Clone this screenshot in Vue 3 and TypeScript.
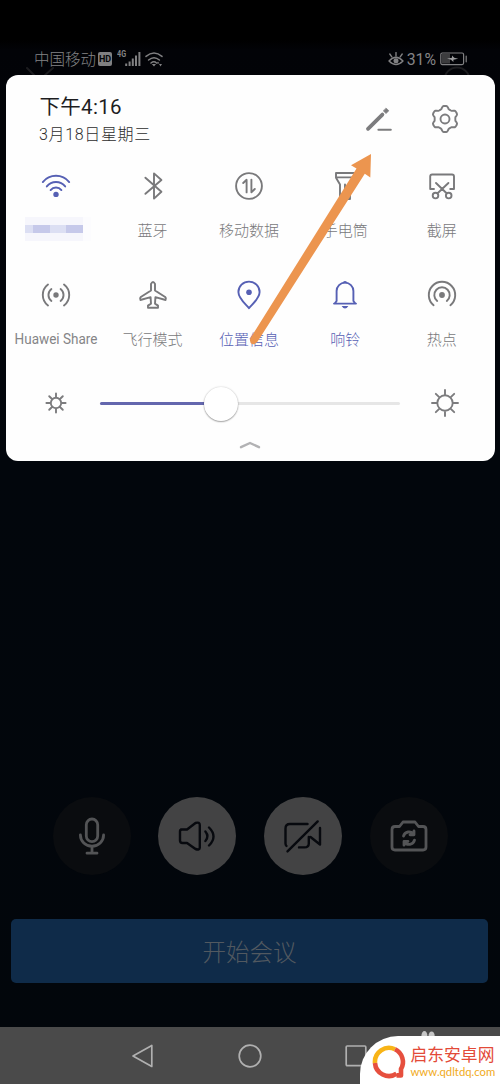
<script setup lang="ts">
interface Tile {
  label: string
  line: string
  solid?: string
  active?: boolean
  kind?: 'mosaic' | 'latin'
}

const dot = (x: number, y: number, r: number): string =>
  `M${x - r} ${y}a${r} ${r} 0 1 0 ${2 * r} 0a${r} ${r} 0 1 0 ${-2 * r} 0Z`

const tiles: Tile[] = [
  {
    label: '',
    kind: 'mosaic',
    active: true,
    line: 'M-13.2 -3.9A17 17 0 0 1 13.2 -3.9M-9.2 .4A11.8 11.8 0 0 1 9.2 .4M-5.4 4.1A7 7 0 0 1 5.4 4.1',
    solid: dot(0, 8.4, 2.7),
  },
  { label: '蓝牙', line: 'M-7.6 -8.3L8.4 5.8L1 12.6V-12.6L8.4 -6L-7.6 7.8' },
  {
    label: '移动数据',
    line: dot(0, 0, 12.9) + 'M-5.8 -3L-2.4 -6.2V6.4M2.4 -6.4V6.2L5.8 3',
  },
  {
    label: '手电筒',
    line: 'M-9 -13H9V-8.3L5 -1.5V13H-5V-1.5L-9 -8.3ZM-9 -8.6H9M0 -1.5V3',
  },
  {
    label: '截屏',
    line:
      'M-8 3H-11.8V-9.5Q-11.8 -11.5 -9.8 -11.5H10Q12 -11.5 12 -9.5V3H8.2M-6 -3L4.6 7.2M6.4 -3L-4.4 7.2' +
      dot(-6.5, 9.6, 2.8) +
      dot(6.7, 9.6, 2.8),
  },
  {
    label: 'Huawei Share',
    kind: 'latin',
    line: 'M-4.6 -6A7.6 7.6 0 0 0 -4.6 6M4.6 -6A7.6 7.6 0 0 1 4.6 6M-8 -10.5A13.2 13.2 0 0 0 -8 10.5M8 -10.5A13.2 13.2 0 0 1 8 10.5',
    solid: dot(0, 0, 2.7),
  },
  {
    label: '飞行模式',
    line: 'M-2 -11Q0 -15 2 -11V-4.5L12.2 2Q13.6 3.4 12.6 5L2.4 2.2L2 8.6L5 10.6V12.8H-5V10.6L-2 8.6L-2.4 2.2L-12.6 5Q-13.6 3.4 -12.2 2L-2 -4.5Z',
  },
  {
    label: '位置信息',
    active: true,
    line: 'M0 13.2C-3.5 9 -10.6 3.4 -10.6 -3A10.6 10.4 0 0 1 10.6 -3C10.6 3.4 3.5 9 0 13.2Z',
    solid: dot(0, -2.8, 2.8),
  },
  {
    label: '响铃',
    active: true,
    line: 'M-11 8.6H11M-10.4 8.6L-8.4 6V-4A8.4 8.4 0 0 1 8.4 -4V6L10.4 8.6',
    solid: 'M-3 -11.8Q0 -16 3 -11.8ZM-3.4 11H3.4Q0 16 -3.4 11Z',
  },
  {
    label: '热点',
    line: 'M-8.4 10.2A13.2 13.2 0 1 1 8.4 10.2M-4.8 6A7.7 7.7 0 1 1 4.8 6',
    solid: dot(0, 0, 2.9),
  },
]

const sunRays = (inner: number, outer: number): string =>
  Array.from({ length: 8 }, (_, i) => {
    const a = (i * Math.PI) / 4
    const p = (r: number) => `${(Math.cos(a) * r).toFixed(2)} ${(Math.sin(a) * r).toFixed(2)}`
    return `M${p(inner)}L${p(outer)}`
  }).join('')

const smallSun = dot(0, 0, 5.2) + sunRays(5.6, 9.6)
const largeSun = dot(0, 0, 7.7) + sunRays(8.2, 13)

const gear = (() => {
  const pts: string[] = []
  for (let i = 0; i < 72; i++) {
    const a = (i / 72) * Math.PI * 2 - Math.PI / 2
    const r = 11.7 + 1.4 * Math.tanh(2.2 * Math.cos(6 * a + Math.PI))
    pts.push(`${(Math.cos(a) * r).toFixed(2)} ${(Math.sin(a) * r).toFixed(2)}`)
  }
  return 'M' + pts.join('L') + 'Z' + dot(0, 0, 4.5)
})()

interface Control {
  name: string
  light: boolean
  line: string
}

const controls: Control[] = [
  {
    name: 'mic',
    light: false,
    line: 'M-5.7 -11.3A5.7 5.7 0 0 1 5.7 -11.3V0A5.7 5.7 0 0 1 -5.7 0ZM-11.6 -1A11.6 11.2 0 0 0 11.6 -1M0 10.4V17M-5 17.2H5',
  },
  {
    name: 'speaker',
    light: true,
    line: 'M-16 -6.5H-10L-1.5 -13Q2.8 -14.2 2.8 -11V11.5Q2.8 14.5 -1.5 13L-10 7H-14.5Q-17 7 -17 4.5V-4.5Q-17 -6.5 -15 -6.5M8.4 -4.5Q12.4 .3 8.4 5M12 -8.5Q21 .3 12 9.5',
  },
  {
    name: 'camera-off',
    light: true,
    line: 'M4.5 -12H-13Q-17.5 -12 -17.5 -7.5V7.5Q-17.5 9 -16.5 10M-4 11.4H1.5Q5.8 11.4 5.8 7.4V1M7.5 1L17 8.5V-8M-15.5 15.4L14.7 -14.6',
  },
  {
    name: 'camera-flip',
    light: false,
    line: 'M-14 -9.5H-9.5L-6 -14H6L9.5 -9.5H14Q17 -9.5 17 -6.5V11Q17 14 14 14H-14Q-17 14 -17 11V-6.5Q-17 -9.5 -14 -9.5ZM-5.5 .2A5.6 5.6 0 0 1 4.6 -1.6M5.5 4.2A5.6 5.6 0 0 1 -4.6 5.9M5 -5V-1.2H1M-5 9.2V5.4H-1',
  },
]
</script>

<template>
  <div class="screen">
    <header class="status">
      <span class="carrier">中国移动</span>
      <span class="hd">HD</span>
      <span class="net">4G</span>
      <svg class="signal" width="16" height="15" viewBox="0 0 16 15">
        <path d="M1.2 11.5V14M4.6 9.5V14M7.8 6.5V14M11 3.5V14M14.4 0V14" />
      </svg>
      <svg class="wlan" width="18" height="15" viewBox="0 0 18 15">
        <path d="M1 4.4Q9 -2.4 17 4.4M3.6 8Q9 3.4 14.4 8M6 11Q9 8.6 11.5 11" />
        <path class="solid" d="M6.8 12L9 14.5L11 12ZM13 9.5L14.4 11.5H11.6ZM15.5 14.5L14 12H17Z" />
      </svg>
      <span class="gap"></span>
      <svg class="eye" width="16" height="15" viewBox="0 0 16 15">
        <path d="M1 9Q8 1.5 15 9Q8 16 1 9ZM8 3.8V.6M3.8 4.8L1.8 2M12.2 4.8L14.2 2" />
        <circle class="solid" cx="8" cy="8.8" r="2.5" />
      </svg>
      <span class="percent">31%</span>
      <svg class="battery" width="28" height="14" viewBox="0 0 28 14">
        <rect class="charge" x="2" y="2" width="8" height="9.5" />
        <rect x=".8" y="1" width="22.8" height="11.6" rx="1.5" />
        <path d="M26.2 4V9.8" />
        <path class="bolt" d="M7 6.4L12 5.8V3.6L14.2 5.8L18.2 6.8L13.4 7.8V10L11 7.8Z" />
      </svg>
      <svg class="backdrop" width="500" height="12" viewBox="0 64 500 12">
        <path d="M27 69L35 77M53 69L44 77" />
        <circle cx="457" cy="81" r="12.5" />
      </svg>
    </header>

    <section class="panel">
      <div class="head">
        <div>
          <div class="time">下午4:16</div>
          <div class="date">3月18日星期三</div>
        </div>
        <div class="tools">
          <svg width="32" height="32" viewBox="-16 -16 32 32">
            <path class="pencil" d="M-10 9.8L4.4 -4.4" />
            <path class="tip" d="M8.3 -10.8L10.9 -8.2L8 -5.4L5.4 -8Z" />
            <path class="underline" d="M.4 10.7H12.8" />
          </svg>
          <svg class="line" width="32" height="32" viewBox="-16 -16 32 32"><path :d="gear" /></svg>
        </div>
      </div>

      <div class="tiles">
        <div v-for="(t, i) in tiles" :key="i" class="tile" :class="{ active: t.active }">
          <svg width="32" height="32" viewBox="-16 -16 32 32">
            <path class="stroke" :d="t.line" />
            <path v-if="t.solid" class="fill" :d="t.solid" />
          </svg>
          <div v-if="t.kind === 'mosaic'" class="mosaic">
            <i v-for="n in 24" :key="n" :class="'m' + n"></i>
          </div>
          <span v-else class="label" :class="t.kind">{{ t.label }}</span>
        </div>
      </div>

      <div class="brightness">
        <svg class="line" width="32" height="32" viewBox="-16 -16 32 32"><path :d="smallSun" /></svg>
        <div class="track"><div class="level"></div><div class="knob"></div></div>
        <svg class="line" width="32" height="32" viewBox="-16 -16 32 32"><path :d="largeSun" /></svg>
      </div>
      <svg class="handle" width="22" height="10" viewBox="0 0 22 10"><path d="M2 7.2L11 3L20 7.2" /></svg>
    </section>

    <div class="controls">
      <div v-for="c in controls" :key="c.name" class="control" :class="{ light: c.light }">
        <svg width="44" height="44" viewBox="-22 -22 44 44"><path :d="c.line" /></svg>
      </div>
    </div>

    <div class="start">开始会议</div>

    <nav class="nav">
      <svg width="24" height="26" viewBox="0 0 24 26"><path d="M20.8 2.4V23.4L2 13Z" /></svg>
      <svg width="26" height="26" viewBox="0 0 26 26"><circle cx="13" cy="13" r="10.8" /></svg>
      <svg width="24" height="26" viewBox="0 0 24 26"><rect x="1.2" y="3" width="19.6" height="19.6" rx="1" /></svg>
    </nav>

    <svg class="arrow" width="140" height="200" viewBox="240 150 140 200">
      <path d="M371 154L351 165.3L356.5 168.6L250.2 338.5Q249.2 343.2 252.5 344.2Q255.4 344.6 257.6 341.5L364.8 173.8L370.3 177.6Z" />
    </svg>

    <svg class="ears" width="18" height="12" viewBox="0 0 18 12">
      <ellipse cx="4.4" cy="6" rx="3" ry="5" />
      <ellipse cx="11.6" cy="6.4" rx="3.1" ry="5" />
    </svg>
    <div class="brand">
      <svg width="36" height="36" viewBox="0 0 36 36">
        <path class="yellow" d="M4 19A14 14 0 0 1 24 5.3" />
        <path class="red" d="M24 5.3A14 14 0 0 1 30 25V31.4H25.5" />
        <path class="red" d="M4 19A14 14 0 0 0 25.5 29.8" />
      </svg>
      <div>
        <div class="brand-name">启东安卓网</div>
        <div class="brand-url">www.qdltdq.com</div>
      </div>
    </div>
  </div>
</template>

<style>
body {
  background: #000;
}
</style>

<style scoped>
.screen {
  position: relative;
  box-sizing: border-box;
  width: 500px;
  height: 1084px;
  overflow: hidden;
  display: flex;
  flex-direction: column;
  background: linear-gradient(#000 40px, #020307 50px, #02060c 460px, #02060b);
  font-family: Roboto, 'Noto Sans CJK SC', sans-serif;
  font-weight: 300;
}
svg {
  display: block;
  flex: none;
  fill: none;
  stroke-linecap: round;
  stroke-linejoin: round;
}
.status {
  position: relative;
  box-sizing: border-box;
  height: 75px;
  padding: 43px 32px 0 34px;
  display: flex;
  align-items: center;
  color: #848486;
  stroke: #808082;
}
.carrier {
  padding-top: 2px;
  font-size: 15.5px;
  line-height: 30px;
}
.hd {
  width: 14px;
  height: 14px;
  margin-left: 2px;
  border-radius: 2px;
  background: #808082;
  color: #050608;
  font-size: 9px;
  font-weight: 700;
  line-height: 14px;
  text-align: center;
}
.net {
  width: 8px;
  margin: -9px 0 0 5px;
  font-size: 9px;
  font-weight: 700;
  line-height: 9px;
  transform: scaleX(0.8);
  transform-origin: left;
}
.signal {
  stroke-width: 2;
  stroke-linecap: butt;
}
.wlan {
  margin-left: 4px;
  stroke-width: 1.5;
}
.solid {
  fill: #808082;
  stroke: none;
}
.gap {
  flex: 1;
}
.eye {
  stroke-width: 1.4;
  margin-right: 3px;
}
.percent {
  margin-right: 4px;
  font-size: 15.8px;
  font-weight: 400;
}
.battery {
  stroke-width: 1.2;
}
.charge {
  fill: #3c3c3e;
  stroke: none;
}
.bolt {
  fill: #9a9a9c;
  stroke: none;
}
.backdrop {
  position: absolute;
  left: 0;
  bottom: 0;
  stroke: #1c1c1f;
  stroke-width: 2;
}
.panel {
  box-sizing: border-box;
  width: 489px;
  height: 386px;
  margin-left: 5.5px;
  border-radius: 12px;
  background: #fefefe;
}
.head {
  box-sizing: border-box;
  height: 85px;
  padding: 19px 33.5px 0 34px;
  display: flex;
  justify-content: space-between;
}
.time {
  color: #1d1d1f;
  font-size: 20.5px;
  line-height: 27px;
  font-weight: 400;
  letter-spacing: 0.3px;
  white-space: nowrap;
}
.date {
  margin-left: -0.5px;
  color: #2c2c2c;
  font-size: 16px;
  line-height: 27px;
  letter-spacing: 0.65px;
  white-space: nowrap;
}
.tools {
  display: flex;
  gap: 35px;
  padding-top: 9px;
}
.tools svg {
  stroke: #7c7c7e;
}
.pencil {
  stroke-width: 3.8;
}
.tools .tip {
  fill: #7c7c7e;
  stroke-width: 0.6;
}
.underline {
  stroke-width: 2;
}
.line {
  stroke: #7c7c7e;
  stroke-width: 1.9;
}
.tiles {
  display: grid;
  grid-template-columns: repeat(5, 96.4px);
  grid-auto-rows: 108.5px;
  height: 217px;
  padding: 10px 0 0 2.5px;
}
.tile {
  display: flex;
  flex-direction: column;
  align-items: center;
  color: #79797b;
}
.active {
  color: #5660b4;
}
.stroke {
  stroke: currentColor;
  stroke-width: 1.9;
}
.fill {
  fill: currentColor;
}
.label {
  margin-top: 17px;
  font-size: 15px;
  line-height: 24px;
  white-space: nowrap;
}
.latin {
  margin-top: 16px;
  font-weight: 400;
  color: #858587;
  transform: scaleX(0.9);
}
.mosaic {
  display: grid;
  grid-template-columns: repeat(8, 8.3px);
  grid-template-rows: repeat(3, 8px);
  margin: 15px 0 0 4px;
}
.mosaic i {
  background: #f6f6fc;
}
.mosaic .m9,
.mosaic .m12,
.mosaic .m13 {
  background: #dcdff3;
}
.mosaic .m10,
.mosaic .m11,
.mosaic .m14,
.mosaic .m15 {
  background: #c6c9ea;
}
.mosaic .m8,
.mosaic .m16,
.mosaic .m24 {
  background: #fcfcfe;
}
.brightness {
  display: flex;
  align-items: center;
  justify-content: space-between;
  height: 32px;
  padding: 0 33.4px 0 34.1px;
}
.track {
  position: relative;
  width: 300px;
  height: 3px;
  border-radius: 2px;
  background: #e6e6e6;
}
.level {
  width: 121px;
  height: 3px;
  border-radius: 2px;
  background: #6467ae;
}
.knob {
  position: absolute;
  left: 104px;
  top: -15px;
  width: 34px;
  height: 34px;
  border-radius: 50%;
  background: #fff;
  box-shadow: 0 1px 1.5px rgba(0, 0, 0, 0.32), 0 0 2px rgba(0, 0, 0, 0.2);
}
.handle {
  margin: 21px auto 0;
  stroke: #b2b2b4;
  stroke-width: 2.4;
}
.controls {
  display: flex;
  justify-content: space-between;
  margin: 335.5px 52px 0 52.5px;
}
.control {
  width: 78px;
  height: 78px;
  border-radius: 50%;
  display: flex;
  align-items: center;
  justify-content: center;
  background: #0a0c0f;
  stroke: #535456;
  stroke-width: 2.8;
}
.light {
  background: #434344;
  stroke: #07090e;
  stroke-width: 2.4;
}
.start {
  box-sizing: border-box;
  width: 477px;
  height: 64px;
  margin: 44.5px 0 0 11px;
  padding-top: 1px;
  border-radius: 5px;
  background: #0f2b49;
  color: #525960;
  font-size: 23.5px;
  line-height: 66px;
  text-align: center;
}
.nav {
  margin-top: auto;
  height: 57px;
  display: flex;
  align-items: center;
  justify-content: center;
  gap: 82px;
  background: #4a4a4a;
  stroke: #b0b0b0;
  stroke-width: 1.7;
}
.arrow {
  position: absolute;
  left: 240px;
  top: 150px;
}
.arrow path {
  fill: #ec954f;
}
.ears {
  position: absolute;
  left: 420px;
  top: 1030px;
  fill: #c6c6c6;
}
.brand {
  position: absolute;
  right: 0;
  bottom: 0;
  box-sizing: border-box;
  width: 140px;
  height: 48px;
  padding: 4px 0 0 11px;
  border-top-left-radius: 38px;
  background: #fff;
  display: flex;
  align-items: center;
  gap: 3.5px;
  white-space: nowrap;
}
.brand svg {
  stroke-width: 4.6;
  stroke-linecap: butt;
}
.yellow {
  stroke: #f8b417;
}
.red {
  stroke: #e64f3e;
}
.brand-name {
  color: #e34a38;
  font-size: 16.8px;
  line-height: 19px;
  font-weight: 400;
}
.brand-url {
  color: #f1ab22;
  font-family: Lato, sans-serif;
  font-size: 11.3px;
  line-height: 13px;
  font-weight: 400;
}
</style>
